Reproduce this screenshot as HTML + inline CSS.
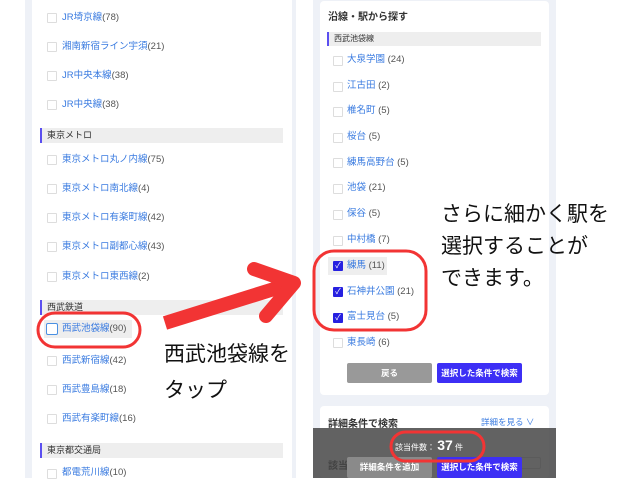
<!DOCTYPE html>
<html><head><meta charset="utf-8"><style>
*{margin:0;padding:0;box-sizing:border-box}
body{width:640px;height:478px;overflow:hidden;background:#fff;position:relative;font-family:"Liberation Sans","Noto Sans CJK JP",sans-serif}
.a{position:absolute}
.it{position:absolute;font-size:9.5px;color:#3a7be0;white-space:nowrap;line-height:12px}
.it span{color:#555}
.cb{position:absolute;width:10px;height:10px;border:1px solid #ddd;background:#fff;border-radius:1px}
.hd{position:absolute;background:#eee;border-left:2px solid #5b4ff0;font-size:9px;color:#333;line-height:14px;padding-left:5px}
.ck{position:absolute;width:10px;height:10px;background:#2620e0;border-radius:1px;color:#fff;font-size:8px;line-height:10px;text-align:center}
.btn{position:absolute;height:20px;border-radius:2px;color:#fff;font-size:8.5px;font-weight:bold;text-align:center;line-height:20px}
.big{position:absolute;font-size:21px;color:#111;white-space:nowrap;line-height:32px;font-family:"Noto Sans CJK JP",sans-serif}
</style></head><body>
<div class="a" style="left:25px;top:0;width:271px;height:478px;background:#eef1f7"></div>
<div class="a" style="left:32px;top:0;width:260px;height:478px;background:#fff"></div>
<div class="cb" style="left:47px;top:13px"></div><div class="it" style="left:62px;top:12px">JR埼京線<span>(78)</span></div>
<div class="cb" style="left:47px;top:42px"></div><div class="it" style="left:62px;top:41px">湘南新宿ライン宇須<span>(21)</span></div>
<div class="cb" style="left:47px;top:71px"></div><div class="it" style="left:62px;top:70px">JR中央本線<span>(38)</span></div>
<div class="cb" style="left:47px;top:100px"></div><div class="it" style="left:62px;top:99px">JR中央線<span>(38)</span></div>
<div class="hd" style="left:40px;top:128px;width:243px;height:15px">東京メトロ</div>
<div class="cb" style="left:47px;top:155px"></div><div class="it" style="left:62px;top:154px">東京メトロ丸ノ内線<span>(75)</span></div>
<div class="cb" style="left:47px;top:184px"></div><div class="it" style="left:62px;top:183px">東京メトロ南北線<span>(4)</span></div>
<div class="cb" style="left:47px;top:213px"></div><div class="it" style="left:62px;top:212px">東京メトロ有楽町線<span>(42)</span></div>
<div class="cb" style="left:47px;top:242px"></div><div class="it" style="left:62px;top:241px">東京メトロ副都心線<span>(43)</span></div>
<div class="cb" style="left:47px;top:272px"></div><div class="it" style="left:62px;top:271px">東京メトロ東西線<span>(2)</span></div>
<div class="hd" style="left:40px;top:300px;width:243px;height:15px">西武鉄道</div>
<div class="a" style="left:44px;top:320px;width:88px;height:18px;background:#eee"></div>
<div class="cb" style="left:46px;top:323px;width:12px;height:12px;border:1.5px solid #4a90e2;border-radius:2px"></div><div class="it" style="left:62px;top:323px">西武池袋線<span>(90)</span></div>
<div class="cb" style="left:47px;top:356px"></div><div class="it" style="left:62px;top:355px">西武新宿線<span>(42)</span></div>
<div class="cb" style="left:47px;top:385px"></div><div class="it" style="left:62px;top:384px">西武豊島線<span>(18)</span></div>
<div class="cb" style="left:47px;top:414px"></div><div class="it" style="left:62px;top:413px">西武有楽町線<span>(16)</span></div>
<div class="hd" style="left:40px;top:443px;width:243px;height:15px">東京都交通局</div>
<div class="cb" style="left:47px;top:469px"></div><div class="it" style="left:62px;top:467px">都電荒川線<span>(10)</span></div>

<div class="a" style="left:313px;top:0;width:243px;height:478px;background:#eef1f7"></div>
<div class="a" style="left:320px;top:1px;width:229px;height:394px;background:#fff;border-radius:4px"></div>
<div class="a" style="left:328px;top:8px;font-size:10px;font-weight:bold;color:#333">沿線・駅から探す</div>
<div class="hd" style="left:327px;top:32px;width:214px;height:14px;font-size:8px;line-height:14px">西武池袋線</div>
<div class="cb" style="left:333px;top:56px"></div><div class="it" style="left:347px;top:54px">大泉学園 <span>(24)</span></div>
<div class="cb" style="left:333px;top:82px"></div><div class="it" style="left:347px;top:80px">江古田 <span>(2)</span></div>
<div class="cb" style="left:333px;top:107px"></div><div class="it" style="left:347px;top:105px">椎名町 <span>(5)</span></div>
<div class="cb" style="left:333px;top:133px"></div><div class="it" style="left:347px;top:131px">桜台 <span>(5)</span></div>
<div class="cb" style="left:333px;top:158px"></div><div class="it" style="left:347px;top:157px">練馬高野台 <span>(5)</span></div>
<div class="cb" style="left:333px;top:184px"></div><div class="it" style="left:347px;top:182px">池袋 <span>(21)</span></div>
<div class="cb" style="left:333px;top:210px"></div><div class="it" style="left:347px;top:208px">保谷 <span>(5)</span></div>
<div class="cb" style="left:333px;top:236px"></div><div class="it" style="left:347px;top:234px">中村橋 <span>(7)</span></div>
<div class="a" style="left:328px;top:257px;width:59px;height:18px;background:#eee"></div>
<div class="ck" style="left:333px;top:261px">✓</div><div class="it" style="left:347px;top:260px">練馬 <span>(11)</span></div>
<div class="ck" style="left:333px;top:287px">✓</div><div class="it" style="left:347px;top:286px">石神井公園 <span>(21)</span></div>
<div class="ck" style="left:333px;top:313px">✓</div><div class="it" style="left:347px;top:311px">富士見台 <span>(5)</span></div>
<div class="cb" style="left:333px;top:338px"></div><div class="it" style="left:347px;top:337px">東長崎 <span>(6)</span></div>
<div class="btn" style="left:347px;top:363px;width:85px;background:#999">戻る</div>
<div class="btn" style="left:437px;top:363px;width:85px;background:#3d2ff5">選択した条件で検索</div>
<div class="a" style="left:320px;top:406px;width:229px;height:72px;background:#fff;border-radius:4px"></div>
<div class="a" style="left:328px;top:415px;font-size:10px;font-weight:bold;color:#333">詳細条件で検索</div>
<div class="a" style="left:481px;top:416px;font-size:8.5px;color:#3a7be0">詳細を見る ∨</div>
<div class="a" style="left:328px;top:457px;font-size:10px;font-weight:bold;color:#333">該当</div>
<div class="a" style="left:485px;top:457px;width:56px;height:12px;border:1px solid #ccc;border-radius:2px"></div>
<div class="a" style="left:313px;top:428px;width:243px;height:50px;background:rgba(70,70,70,0.85)"></div>
<div class="a" style="left:395px;top:437px;font-size:8px;color:#fff;white-space:nowrap">該当件数： <b style="font-size:14px">37</b> 件</div>
<div class="btn" style="left:347px;top:457px;width:85px;height:21px;background:#8a8a8a">詳細条件を追加</div>
<div class="btn" style="left:437px;top:457px;width:85px;height:21px;background:#3d2ff5">選択した条件で検索</div>

<div class="big" style="left:164px;top:337px">西武池袋線を</div>
<div class="big" style="left:164px;top:373px">タップ</div>
<div class="big" style="left:441px;top:197px">さらに細かく駅を</div>
<div class="big" style="left:441px;top:229px">選択することが</div>
<div class="big" style="left:441px;top:261px">できます。</div>
<svg class="a" style="left:0;top:0" width="640" height="478">
<g fill="none" stroke="#f23434" stroke-linecap="round" stroke-linejoin="round">
<path d="M165 323 L290 284" stroke-width="14" stroke-linecap="butt"/>
<path d="M254 269 L294 283 L266 316" stroke-width="14"/>
<rect x="38" y="313" width="102" height="34" rx="17" stroke-width="3"/>
<rect x="314" y="251" width="112" height="79" rx="20" stroke-width="3"/>
<rect x="391" y="432" width="93" height="29" rx="14.5" stroke-width="3"/>
</g></svg>
</body></html>
